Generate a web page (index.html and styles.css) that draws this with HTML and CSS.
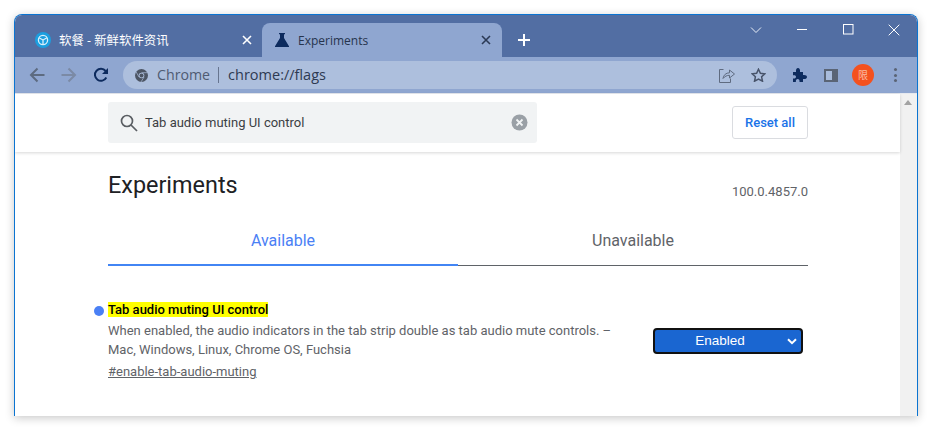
FILE: index.html
```html
<!DOCTYPE html>
<html lang="zh">
<head>
<meta charset="utf-8">
<title>Experiments</title>
<link rel="stylesheet" href="styles.css">
</head>
<body>
<div class="window">
  <div class="strip">
    <div class="tab tab-inactive">
      <svg class="fav" width="16" height="16" viewBox="0 0 16 16"><circle cx="8" cy="8" r="8" fill="#1c9fe0"/><circle cx="8" cy="8" r="4.6" fill="none" stroke="#d8effa" stroke-width="1.3"/><path d="M8 8V12.6M8 8L4 5.8M8 8l4-2.2" fill="none" stroke="#d8effa" stroke-width="1.3"/></svg>
      <span class="tab-title">软餐 - 新鲜软件资讯</span>
      <svg class="tab-x" width="10" height="10" viewBox="0 0 10 10"><path d="M1 1l8 8M9 1l-8 8" stroke="#fff" stroke-width="1.6"/></svg>
    </div>
    <div class="tab tab-active">
      <svg class="flask" width="14" height="14" viewBox="0 0 14 14"><path d="M4 0h6v1.3H9V5l5 8.2V14H0v-.8L5 5V1.3H4z" fill="#0d2b5e"/></svg>
      <span class="tab-title dark">Experiments</span>
      <svg class="tab-x" width="10" height="10" viewBox="0 0 10 10"><path d="M1 1l8 8M9 1l-8 8" stroke="#2b3a55" stroke-width="1.6"/></svg>
    </div>
    <svg class="plus" width="14" height="14" viewBox="0 0 14 14"><path d="M7 1v12M1 7h12" stroke="#fff" stroke-width="2"/></svg>
    <div class="controls">
      <svg class="ctl ctl-chev" width="12" height="8" viewBox="0 0 12 8"><path d="M1 1.500l5 5 5-5" fill="none" stroke="#e8edf6" stroke-width="1"/></svg>
      <svg class="ctl ctl-min" width="11" height="11" viewBox="0 0 11 11"><path d="M0 5.500h10" stroke="#fff" stroke-width="1"/></svg>
      <svg class="ctl ctl-max" width="11" height="11" viewBox="0 0 11 11"><rect x=".5" y=".5" width="9.500" height="9.500" fill="none" stroke="#fff"/></svg>
      <svg class="ctl ctl-close" width="12" height="12" viewBox="0 0 12 12"><path d="M.7.7l10.600 10.600M11.300.7L.7 11.300" stroke="#fff" stroke-width="1"/></svg>
    </div>
  </div>
  <div class="toolbar">
    <svg class="nav" width="16" height="16" viewBox="0 0 16 16"><path d="M15.500 8H2M8.500 1.500L2 8l6.500 6.500" fill="none" stroke="#5d6b80" stroke-width="2"/></svg>
    <svg class="nav nav-fwd" width="16" height="16" viewBox="0 0 16 16"><path d="M.5 8H14M7.500 1.500L14 8l-6.500 6.500" fill="none" stroke="#7b8aa5" stroke-width="2"/></svg>
    <svg class="nav nav-reload" width="16" height="16" viewBox="0 0 16 16"><path d="M13.300 10.500A6 6 0 1 1 12.600 4" fill="none" stroke="#0d2b5e" stroke-width="2"/><path d="M15 1v6H9z" fill="#0d2b5e"/></svg>
    <div class="omnibox">
      <svg class="chrome-ic" width="13" height="13" viewBox="0 0 13 13"><circle cx="6.500" cy="6.500" r="6.500" fill="#4c5564"/><circle cx="6.500" cy="6.500" r="2.800" fill="#adbfdd"/><circle cx="6.500" cy="6.500" r="2" fill="#4c5564"/><path d="M6.500 3.700h6M4 8L1.200 3M9 8l-3 5" stroke="#adbfdd" stroke-width=".7"/></svg>
      <span class="omni-site">Chrome</span>
      <span class="omni-sep"></span>
      <span class="omni-url">chrome://flags</span>
      <svg class="omni-share" width="16" height="15" viewBox="0 0 16 15"><path d="M4.500 1.500H.5v13h11v-4" fill="none" stroke="#5f6b80" stroke-width="1"/><path d="M4 10.500C4.500 7 7 4.800 10.500 4.800V2l5 4-5 4V7.300C8 7.300 5.800 8.300 4 10.500z" fill="none" stroke="#5f6b80" stroke-width="1"/></svg>
      <svg class="omni-star" width="15" height="14" viewBox="0 0 15 14"><path d="M7.500 1.200l1.900 4.100 4.500.5-3.300 3 .9 4.400-4-2.200-4 2.200.9-4.400-3.300-3 4.500-.5z" fill="none" stroke="#47536a" stroke-width="1.500"/></svg>
    </div>
    <svg class="tool-puzzle" width="15" height="15" viewBox="0 0 15 15"><path d="M1 4h3C3.600 1.500 4.700 0 6 0s2.400 1.500 2 4h3v3c2.500-.4 4 .7 4 2s-1.500 2.400-4 2v3H7.500c.4-2-.6-3-1.800-3s-2.200 1-1.800 3H1v-3.500c2 .4 3-.6 3-1.800S3 6.900 1 7.300z" fill="#0d2b5e"/></svg>
    <div class="tool-side"><span class="tool-side-fill"></span></div>
    <div class="avatar">限</div>
    <div class="tool-menu"><i></i><i></i><i></i></div>
  </div>
  <div class="viewport">
    <div class="page">
      <header class="head">
        <div class="search">
          <svg class="search-ic" width="18" height="18" viewBox="0 0 18 18"><circle cx="7" cy="7" r="5.500" fill="none" stroke="#5a5e63" stroke-width="1.700"/><path d="M11 11l6 6" stroke="#5a5e63" stroke-width="1.700"/></svg>
          <span class="search-text">Tab audio muting UI control</span>
          <svg class="search-clear" width="17" height="17" viewBox="0 0 17 17"><circle cx="8.500" cy="8.500" r="8" fill="#9aa0a6"/><path d="M5.500 5.500l6 6M11.500 5.500l-6 6" stroke="#f1f3f4" stroke-width="1.800"/></svg>
        </div>
        <button class="reset">Reset all</button>
      </header>
      <main class="body">
        <div class="title-row">
          <h1 class="h1">Experiments</h1>
          <span class="version">100.0.4857.0</span>
        </div>
        <div class="tabs">
          <div class="ptab ptab-on">Available</div>
          <div class="ptab">Unavailable</div>
        </div>
        <section class="flag">
          <div class="flag-info">
            <h2 class="flag-name"><mark class="hl">Tab audio muting UI control</mark></h2>
            <p class="flag-desc">When enabled, the audio indicators in the tab strip double as tab audio mute controls. – Mac, Windows, Linux, Chrome OS, Fuchsia</p>
            <a class="flag-link">#enable-tab-audio-muting</a>
          </div>
          <div class="select"><span>Enabled</span>
            <svg class="select-chev" width="10" height="7" viewBox="0 0 10 7"><path d="M1 1.200l4 4 4-4" fill="none" stroke="#fff" stroke-width="2"/></svg>
          </div>
        </section>
      </main>
    </div>
    <div class="scrollbar"><span class="scroll-up"></span></div>
  </div>
</div>
</body>
</html>
```
FILE: styles.css
```css
* { box-sizing: border-box; }
html, body { margin: 0; height: 100%; background: #fff; overflow: hidden; }
body { padding: 14px 15px 0 14px; font-family: Roboto, "Noto Sans CJK SC", sans-serif; }

.window {
  width: 904px; height: 402px;
  border: 1px solid #0b74d1; border-bottom: 0;
  border-radius: 8px 8px 0 0;
  box-shadow: 0 2px 10px rgba(0,0,0,.22);
  display: flex; flex-direction: column;
  overflow: hidden;
  background: #fff;
}

.strip { height: 42px; background: #526ea3; display: flex; align-items: flex-end; flex: none; }
.tab { height: 34px; display: flex; align-items: center; flex: none; }
.tab-inactive { width: 247px; padding: 0 10px 0 20px; }
.tab-active { width: 240px; padding: 0 11px 0 13px; background: #8fa6d0; border-radius: 8px 8px 0 0; }
.fav { flex: none; margin-right: 8px; }
.flask { flex: none; margin-right: 9px; }
.tab-title { flex: 1; font: 12.4px "Open Sans", "Noto Sans CJK SC", sans-serif; color: #fff; white-space: nowrap; }
.tab-title.dark { color: #26344d; font-size: 12px; }
.tab-x { flex: none; }
.plus { margin: 0 0 10px 15px; flex: none; }
.controls { margin-left: auto; align-self: stretch; display: flex; align-items: flex-start; padding-right: 17px; }
.ctl { display: block; margin-top: 9px; }
.ctl-chev { margin-top: 11px; margin-right: 35px; }
.ctl-min { margin-right: 35px; }
.ctl-max { margin-right: 34px; }

.toolbar { height: 36px; background: #8fa6d0; display: flex; align-items: center; flex: none; padding-left: 14px; }
.nav { flex: none; margin-right: 16px; }
.nav-reload { margin-right: 14px; }
.omnibox { width: 654px; height: 28px; border-radius: 14px; background: #adbfdd; display: flex; align-items: center; padding: 0 11px 0 12px; flex: none; }
.chrome-ic { flex: none; margin-right: 9px; }
.omni-site { font: 14.2px "Open Sans", sans-serif; color: #4f5b72; padding-bottom: 2px; }
.omni-sep { width: 1px; height: 16px; background: #67758f; margin: 0 9px 0 8px; }
.omni-url { flex: 1; font: 14.5px "Open Sans", sans-serif; color: #2e3a52; padding-bottom: 2px; }
.omni-share { margin-right: 16px; flex: none; }
.tool-puzzle { flex: none; margin-left: 15px; }
.tool-side { width: 14px; height: 13px; margin-left: 17px; border: 2px solid #5a6475; flex: none; background: #a9bcdc; display: flex; justify-content: flex-end; }
.tool-side-fill { width: 4px; background: #5a6475; }
.avatar { width: 22px; height: 22px; border-radius: 50%; margin-left: 14px; background: #f4511e; color: #fbbda6; font: 10px/22px "Noto Sans CJK SC", sans-serif; text-align: center; flex: none; }
.tool-menu { margin-left: 20px; display: flex; flex-direction: column; gap: 2.5px; flex: none; }
.tool-menu i { display: block; width: 3px; height: 3px; border-radius: 50%; background: #5a6475; }

.viewport { flex: 1; display: flex; min-height: 0; border-top: 1px solid #e6e9ef; }
.page { flex: 1; min-width: 0; background: #fff; }
.scrollbar { width: 17px; background: #f1f1f1; flex: none; padding: 6px 0 0 4px; }
.scroll-up { display: block; width: 0; height: 0; border: 4px solid transparent; border-top: 0; border-bottom: 5px solid #a3a3a3; }

.head { height: 58px; display: flex; align-items: flex-start; padding: 8px 92px 0 93px; box-shadow: 0 1px 3px rgba(0,0,0,.16); position: relative; }
.search { width: 429px; height: 41px; background: #f1f3f4; border-radius: 3px; display: flex; align-items: center; padding: 0 9px 0 12px; }
.search-ic { flex: none; margin-right: 7px; }
.search-text { flex: 1; font-size: 13px; color: #3c4043; }
.reset { margin: 4px 0 0 auto; width: 76px; height: 33px; background: #fff; border: 1px solid #dadce0; border-radius: 3px; color: #1a73e8; font: 500 13px Roboto, sans-serif; padding: 0; }

.body { padding: 0 92px 0 93px; }
.title-row { display: flex; justify-content: space-between; align-items: flex-start; padding-top: 20px; height: 60px; }
.h1 { margin: 0; font: 400 23.4px/26px Roboto, sans-serif; color: #202124; }
.version { font-size: 13px; line-height: 16px; color: #5f6368; margin-top: 12px; }
.tabs { display: flex; height: 54px; }
.ptab { flex: 1; text-align: center; font-size: 16px; line-height: 18px; padding-top: 20px; color: #5f6368; border-bottom: 1px solid #5f6368; }
.ptab-on { color: #4a80f5; border-bottom: 2px solid #4285f4; }

.flag { position: relative; display: flex; justify-content: space-between; align-items: flex-start; padding-top: 36px; }
.flag::before { content: ""; position: absolute; left: -14px; top: 40px; width: 10px; height: 10px; border-radius: 50%; background: #4a80f5; }
.flag-info { width: 520px; }
.flag-name { margin: 0; font: 500 13px/16px Roboto, sans-serif; color: #000; }
.hl { background: #ff0; color: #000; }
.flag-desc { margin: 3px 0 0; font-size: 13px; line-height: 19px; color: #5f6368; }
.flag-link { display: block; margin-top: 3px; font-size: 13px; line-height: 20px; color: #5f6368; text-decoration: underline; }
.select { width: 150px; height: 26px; margin: 26px 5px 0 0; background: #1a66d1; border: 2px solid #111; border-radius: 4px; color: #fff; font: 13.5px/22px "Liberation Sans", sans-serif; position: relative; text-align: center; padding-right: 16px; }
.select-chev { position: absolute; right: 4px; top: 8px; }
```
